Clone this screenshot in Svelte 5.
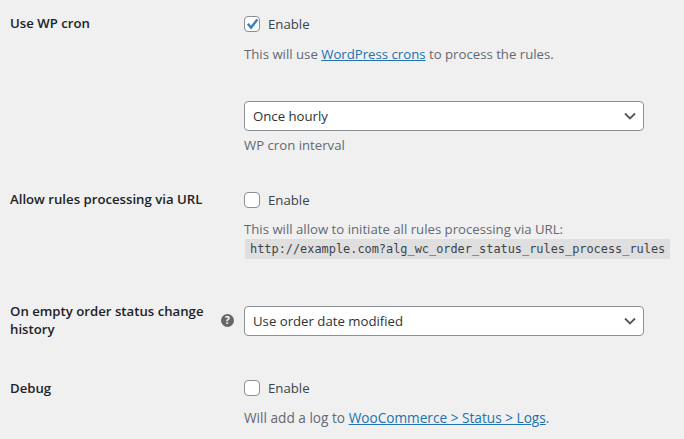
<script>
  const chevron = "M1 1.5 L6 6.5 L11 1.5";
</script>

<main class="table">
  <section class="row first">
    <h3 class="label">Use WP cron</h3>
    <div class="field">
      <label class="check">
        <span class="box">
          <svg width="14" height="14" viewBox="0 0 14 14"><path d="M2.8 6.8 L6.1 10.6 L12.4 2.4" fill="none" stroke="#3582c4" stroke-width="2.4"/></svg>
        </span>
        <span>Enable</span>
      </label>
      <p class="desc after-check">This will use <a href="#a">WordPress crons</a> to process the rules.</p>
      <div class="select cron">
        <span>Once hourly</span>
        <svg width="12" height="8" viewBox="0 0 12 8"><path d={chevron} fill="none" stroke="#50575e" stroke-width="1.8"/></svg>
      </div>
      <p class="desc under-select">WP cron interval</p>
    </div>
  </section>

  <section class="row second">
    <h3 class="label">Allow rules processing via URL</h3>
    <div class="field">
      <label class="check">
        <span class="box"></span>
        <span>Enable</span>
      </label>
      <p class="desc after-url">This will allow to initiate all rules processing via URL:</p>
      <code>http://example.com?alg_wc_order_status_rules_process_rules</code>
    </div>
  </section>

  <section class="row third">
    <div class="label-wrap">
      <h3 class="label">On empty order status change history</h3>
      <span class="help">?</span>
    </div>
    <div class="field">
      <div class="select select-low">
        <span>Use order date modified</span>
        <svg width="12" height="8" viewBox="0 0 12 8"><path d={chevron} fill="none" stroke="#50575e" stroke-width="1.8"/></svg>
      </div>
    </div>
  </section>

  <section class="row fourth">
    <h3 class="label">Debug</h3>
    <div class="field">
      <label class="check">
        <span class="box"></span>
        <span>Enable</span>
      </label>
      <p class="desc after-check wide">Will add a log to <a href="#b">WooCommerce &gt; Status &gt; Logs</a>.</p>
    </div>
  </section>
</main>

<style>
  :global(body) {
    margin: 0;
    background: #f0f0f1;
    overflow: hidden;
  }
  .table {
    font-family: "Open Sans", "Noto Sans", sans-serif;
    font-size: 13.2px;
    line-height: 20px;
    color: #3c434a;
    padding-left: 10px;
    height: 439px;
    box-sizing: border-box;
  }
  .row {
    display: grid;
    grid-template-columns: 234px 400px;
  }
  .first { padding-top: 13px; }
  .second { padding-top: 34px; }
  .third { padding-top: 43px; }
  .fourth { padding-top: 39px; }
  .label {
    margin: 0;
    font-size: 13.2px;
    font-weight: 600;
    line-height: 18px;
    color: #1d2327;
  }
  .first .label, .second .label { padding-top: 1px; }
  .fourth .label { padding-top: 2px; }
  .label-wrap {
    display: flex;
    align-items: center;
    justify-content: space-between;
    padding-right: 10px;
  }
  .label-wrap .label { width: 200px; }
  .help {
    width: 13px;
    height: 13px;
    flex: none;
    border-radius: 50%;
    background: #666;
    color: #fff;
    font-size: 10px;
    font-weight: 700;
    line-height: 13px;
    text-align: center;
  }
  .check {
    display: flex;
    align-items: center;
    gap: 8px;
    height: 22px;
  }
  .box {
    width: 14px;
    height: 14px;
    border: 1px solid #8c8f94;
    border-radius: 4px;
    background: #fff;
    display: block;
  }
  .box svg { display: block; overflow: visible; }
  .desc {
    margin: 0;
    color: #646970;
  }
  .wide { font-size: 13.65px; }
  .after-check { margin-top: 9px; }
  .after-url { margin-top: 8px; }
  a { color: #2271b1; }
  .select {
    box-sizing: border-box;
    height: 30px;
    border: 1px solid #8c8f94;
    border-radius: 4px;
    background: #fff;
    display: flex;
    align-items: center;
    justify-content: space-between;
    padding: 0 7px 0 8px;
    color: #2c3338;
  }
  .select-low { margin-top: 4px; }
  .cron { margin-top: 37px; }
  .under-select { margin-top: 4px; }
  code {
    display: block;
    width: fit-content;
    white-space: nowrap;
    margin: 0 0 0 1px;
    padding: 1px 5px;
    font-family: "DejaVu Sans Mono", monospace;
    font-size: 11.9px;
    line-height: 18px;
    background: #dfdfdf;
    color: #3c434a;
  }
</style>
